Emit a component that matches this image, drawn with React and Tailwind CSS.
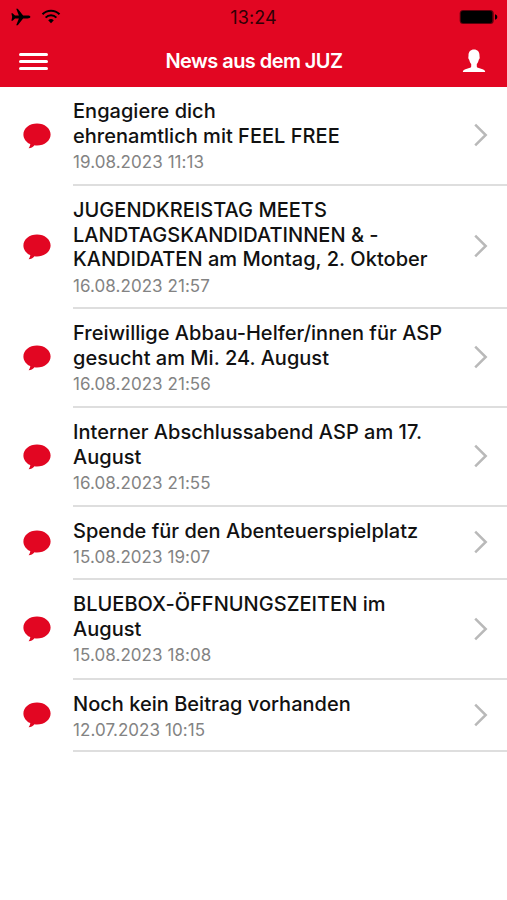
const posts = [
  { id: 1, lines: ['Engagiere dich', 'ehrenamtlich mit FEEL FREE'], date: '19.08.2023 11:13', height: 'h-[99px]' },
  {
    id: 2,
    lines: ['JUGENDKREISTAG MEETS', 'LANDTAGSKANDIDATINNEN & -', 'KANDIDATEN am Montag, 2. Oktober'],
    date: '16.08.2023 21:57',
    height: 'h-[123px]',
  },
  { id: 3, lines: ['Freiwillige Abbau-Helfer/innen für ASP', 'gesucht am Mi. 24. August'], date: '16.08.2023 21:56', height: 'h-[99px]' },
  { id: 4, lines: ['Interner Abschlussabend ASP am 17.', 'August'], date: '16.08.2023 21:55', height: 'h-[99px]' },
  { id: 5, lines: ['Spende für den Abenteuerspielplatz'], date: '15.08.2023 19:07', height: 'h-[73px]' },
  { id: 6, lines: ['BLUEBOX-ÖFFNUNGSZEITEN im', 'August'], date: '15.08.2023 18:08', height: 'h-[100px]' },
  { id: 7, lines: ['Noch kein Beitrag vorhanden'], date: '12.07.2023 10:15', height: 'h-[72px]' },
]

function PlaneIcon() {
  return (
    <svg className="h-[18px] w-[20px]" viewBox="0 0 20 18">
      <path d="M19.4 9c0 .9-1.4 1.4-2.8 1.4h-4.5L6.8 17.2H5.2l2.7-6.8H4L1.6 12.7H.4L1.2 9 .4 5.3h1.2L4 7.6h3.9L5.2.8h1.6l5.3 6.8h4.5c1.4 0 2.8.5 2.8 1.4z" />
    </svg>
  )
}

function WifiIcon() {
  return (
    <svg className="h-[15px] w-[20px]" viewBox="0 0 20 15" fill="none" stroke="#000" strokeWidth="2">
      <path d="M1.5 5.3a12 12 0 0 1 17 0" />
      <path d="M4.6 8.6a7.6 7.6 0 0 1 10.8 0" />
      <path d="M10 14.2l-2.8-2.9a4 4 0 0 1 5.6 0z" fill="#000" stroke="none" />
    </svg>
  )
}

function BatteryIcon() {
  return (
    <svg className="h-[16px] w-[40px]" viewBox="0 0 40 16">
      <rect x=".7" y="1" width="34" height="14" rx="3.5" fill="#5c000c" />
      <rect x="1.8" y="2" width="31.4" height="12" rx="2" />
      <path d="M36 5.2c1.5.4 2.3 1.5 2.3 2.8s-.8 2.4-2.3 2.8z" />
    </svg>
  )
}

function UserIcon() {
  return (
    <svg className="h-[24px] w-[24px]" viewBox="0 0 24 24" fill="#fff">
      <path d="M12 .6c3.500 0 5.500 2.200 5.500 5.800 0 1 .2 1.500.2 2.300 0 .9-.5 1.500-.9 2-.4 2-1.100 3.200-2 4.200v2.300c0 1 .7 1.500 2 1.900l3.800 1.100c1.600.5 2.400 1.200 2.600 2.800H.8c.2-1.600 1-2.300 2.600-2.800l3.800-1.100c1.300-.4 2-.9 2-1.900v-2.300c-.9-1-1.600-2.200-2-4.200-.4-.5-.9-1.100-.9-2 0-.8.2-1.300.2-2.300C6.500 2.800 8.500.6 12 .6z" />
    </svg>
  )
}

function BubbleIcon() {
  return (
    <svg className="h-[26px] w-[28px]" viewBox="0 0 28 26" fill="#e20622">
      <path d="M14 .4c7.600 0 13.600 4.900 13.600 11S21.600 22.400 14 22.400c-.9 0-1.700 0-2.500-.2-1.600 1.800-3.500 2.900-5.900 3.100 1-1.200 1.600-2.700 1.700-4.200C3.100 19.100.4 15.500.4 11.400.4 5.300 6.400.4 14 .4z" />
    </svg>
  )
}

function ChevronIcon() {
  return (
    <svg className="h-[24px] w-[14px]" viewBox="0 0 14 24" fill="none" stroke="#b9b9b9" strokeWidth="2.5">
      <path d="M1.200 1.700L11.700 12 1.200 22.300" />
    </svg>
  )
}

function StatusBar() {
  return (
    <div className="grid h-[34px] grid-cols-3 items-center">
      <div className="flex items-center gap-[10px] pl-[11px] pb-px">
        <PlaneIcon />
        <WifiIcon />
      </div>
      <span className="pt-px text-center text-[18px] leading-[33px] tracking-[0.1px] text-[#300005]">13:24</span>
      <div className="flex justify-end pr-[8px]">
        <BatteryIcon />
      </div>
    </div>
  )
}

function NavBar() {
  return (
    <div className="flex h-[53px] items-center justify-between pr-[21px] pl-[19px]">
      <div className="flex w-[29px] flex-col gap-[4px] pt-[2px]">
        <div className="h-[3px] rounded-full bg-white" />
        <div className="h-[3px] rounded-full bg-white" />
        <div className="h-[3px] rounded-full bg-white" />
      </div>
      <h1 className="pr-[2px] text-[20px] font-semibold tracking-[-0.56px] text-white">News aus dem JUZ</h1>
      <UserIcon />
    </div>
  )
}

function PostRow({ post }) {
  // A wrapped title sits slightly further from its date
  const dateGap = post.lines.length > 1 ? 'pt-[2px]' : 'pt-[1px]'

  return (
    <li className={`flex pl-[23px] ${post.height}`}>
      <div className="flex w-[50px] items-center pb-[2px]">
        <BubbleIcon />
      </div>
      <div className="flex flex-1 justify-between border-b-2 border-[#dedede] pr-[19px]">
        <div className="pt-[12px] whitespace-nowrap">
          <h2 className="text-[20px] leading-[24.7px] font-medium tracking-[0.02px] text-[#111]">
            {post.lines.map(line => (
              <span key={line} className="block">{line}</span>
            ))}
          </h2>
          <p className={`text-[17px] leading-[24px] tracking-[0.06px] text-[#838383] ${dateGap}`}>{post.date}</p>
        </div>
        <div className="flex items-center pb-px">
          <ChevronIcon />
        </div>
      </div>
    </li>
  )
}

export default function App() {
  return (
    <div className="h-[900px] w-[507px] overflow-hidden bg-white font-['Inter',sans-serif]">
      <header className="h-[87px] bg-[#e20622]">
        <StatusBar />
        <NavBar />
      </header>
      <ul>
        {posts.map(post => (
          <PostRow key={post.id} post={post} />
        ))}
      </ul>
    </div>
  )
}
